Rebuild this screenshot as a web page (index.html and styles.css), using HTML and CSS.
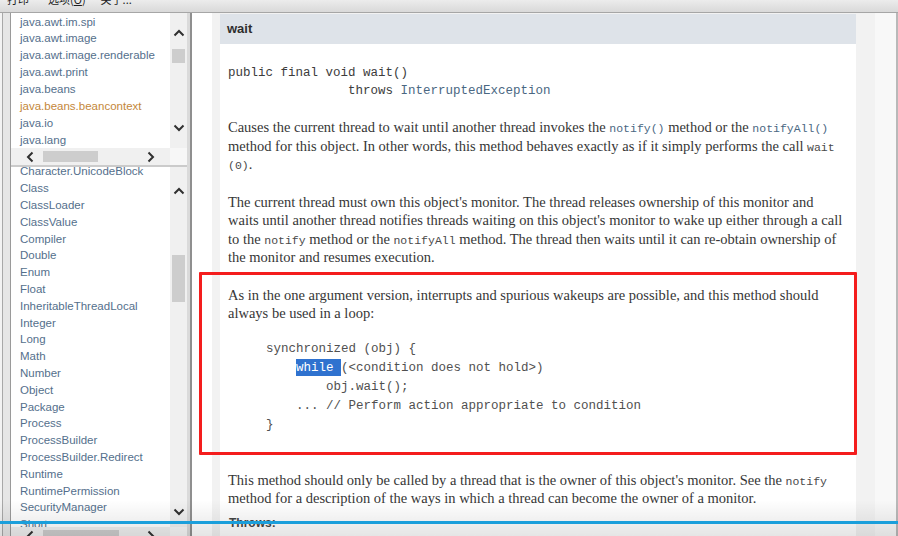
FILE: index.html
```html
<!DOCTYPE html>
<html lang="zh">
<head>
<meta charset="utf-8">
<title>Object (Java Platform SE 8) - wait()</title>
<link rel="stylesheet" href="styles.css">
</head>
<body>
<div class="app">
  <div class="menubar">
    <span class="menu m1">打印</span>
    <span class="menu m2">选项(<u>O</u>)</span>
    <span class="menu m3">关于...</span>
  </div>
  <div class="main">
    <aside class="left">
      <div class="panes">
        <div class="pane pane-top">
          <div class="pane-body">
            <ul class="list">
              <li>java.awt.im.spi</li>
              <li>java.awt.image</li>
              <li>java.awt.image.renderable</li>
              <li>java.awt.print</li>
              <li>java.beans</li>
              <li class="hover">java.beans.beancontext</li>
              <li>java.io</li>
              <li>java.lang</li>
            </ul>
            <div class="vscroll">
              <div class="sb-btn up"><svg width="12" height="8" viewBox="0 0 12 8"><polyline points="1.5,6.5 6,2 10.5,6.5" fill="none" stroke="#303030" stroke-width="2"/></svg></div>
              <div class="thumb-v"></div>
              <div class="sb-fill"></div>
              <div class="sb-btn down"><svg width="12" height="8" viewBox="0 0 12 8"><polyline points="1.5,1.5 6,6 10.5,1.5" fill="none" stroke="#303030" stroke-width="2"/></svg></div>
            </div>
          </div>
          <div class="hscroll">
            <div class="hs-track">
              <div class="hbtn left-btn"><svg width="8" height="12" viewBox="0 0 8 12"><polyline points="6.5,1.5 2,6 6.5,10.5" fill="none" stroke="#303030" stroke-width="2"/></svg></div>
              <div class="thumb-h"></div>
              <div class="sb-fill"></div>
              <div class="hbtn right-btn"><svg width="8" height="12" viewBox="0 0 8 12"><polyline points="1.5,1.5 6,6 1.5,10.5" fill="none" stroke="#303030" stroke-width="2"/></svg></div>
            </div>
            <div class="corner"></div>
          </div>
        </div>
        <div class="pane pane-bottom">
          <div class="pane-body">
            <ul class="list list-classes">
              <li>Character.UnicodeBlock</li>
              <li>Class</li>
              <li>ClassLoader</li>
              <li>ClassValue</li>
              <li>Compiler</li>
              <li>Double</li>
              <li>Enum</li>
              <li>Float</li>
              <li>InheritableThreadLocal</li>
              <li>Integer</li>
              <li>Long</li>
              <li>Math</li>
              <li>Number</li>
              <li>Object</li>
              <li>Package</li>
              <li>Process</li>
              <li>ProcessBuilder</li>
              <li>ProcessBuilder.Redirect</li>
              <li>Runtime</li>
              <li>RuntimePermission</li>
              <li>SecurityManager</li>
              <li>Short</li>
              <li>StackTraceElement</li>
            </ul>
            <div class="vscroll vs-bottom">
              <div class="sb-btn up"><svg width="12" height="8" viewBox="0 0 12 8"><polyline points="1.5,6.5 6,2 10.5,6.5" fill="none" stroke="#303030" stroke-width="2"/></svg></div>
              <div class="thumb-v"></div>
              <div class="sb-fill"></div>
              <div class="sb-btn down"><svg width="12" height="8" viewBox="0 0 12 8"><polyline points="1.5,1.5 6,6 10.5,1.5" fill="none" stroke="#303030" stroke-width="2"/></svg></div>
            </div>
          </div>
          <div class="hscroll hs-bottom">
            <div class="hs-track">
              <div class="hbtn left-btn"><svg width="8" height="12" viewBox="0 0 8 12"><polyline points="6.5,1.5 2,6 6.5,10.5" fill="none" stroke="#303030" stroke-width="2"/></svg></div>
              <div class="thumb-h"></div>
              <div class="sb-fill"></div>
              <div class="hbtn right-btn"><svg width="8" height="12" viewBox="0 0 8 12"><polyline points="1.5,1.5 6,6 1.5,10.5" fill="none" stroke="#303030" stroke-width="2"/></svg></div>
            </div>
            <div class="corner"></div>
          </div>
        </div>
      </div>
    </aside>
    <main class="doc">
      <div class="li-block">
        <div class="member">
          <h4 class="member-title">wait</h4>
          <div class="member-body">
            <pre class="signature">public&nbsp;final&nbsp;void&nbsp;wait()
                throws <a class="link">InterruptedException</a></pre>
            <p class="para">Causes the current thread to wait until another thread invokes the <code class="link">notify()</code> method or the <code class="link">notifyAll()</code><br>method for this object. In other words, this method behaves exactly as if it simply performs the call <code>wait</code><br><code>(0)</code>.</p>
            <p class="para">The current thread must own this object's monitor. The thread releases ownership of this monitor and<br>waits until another thread notifies threads waiting on this object's monitor to wake up either through a call<br>to the <code>notify</code> method or the <code>notifyAll</code> method. The thread then waits until it can re-obtain ownership of<br>the monitor and resumes execution.</p>
            <p class="para">As in the one argument version, interrupts and spurious wakeups are possible, and this method should<br>always be used in a loop:</p>
            <pre class="code">synchronized (obj) {
    <mark class="sel">while </mark>(&lt;condition does not hold&gt;)
        obj.wait();
    ... // Perform action appropriate to condition
}</pre>
            <p class="para para-after">This method should only be called by a thread that is the owner of this object's monitor. See the <code>notify</code><br>method for a description of the ways in which a thread can become the owner of a monitor.</p>
            <dl class="throws">
              <dt>Throws:</dt>
              <dd><code class="link">IllegalMonitorStateException</code> - if the current thread is not the owner of the object's monitor.</dd>
            </dl>
          </div>
        </div>
      </div>
      <div class="doc-edge"></div>
    </main>
  </div>
  <div class="annotation"></div>
  <div class="player-shade"></div>
  <div class="player-progress"></div>
</div>
</body>
</html>
```
FILE: styles.css
```css
* { box-sizing: border-box; }
html, body { margin: 0; padding: 0; }
body {
  width: 898px;
  height: 536px;
  overflow: hidden;
  background: #fff;
  font-family: "Liberation Sans", Arial, sans-serif;
}
.app {
  position: relative;
  width: 898px;
  height: 536px;
  display: flex;
  flex-direction: column;
  overflow: hidden;
}

/* menu bar (top clipped) */
.menubar {
  flex: none;
  height: 13px;
  display: flex;
  overflow: hidden;
  background: linear-gradient(#ececec, #d9d9d9);
  border-bottom: 1px solid #a6a6a6;
  font-family: "Noto Sans CJK SC", "Liberation Sans", sans-serif;
  font-size: 11px;
  color: #1e1e1e;
}
.menu { line-height: 12px; margin-top: -7px; white-space: nowrap; }
.m1 { margin-left: 7px; }
.m2 { margin-left: 19px; }
.m3 { margin-left: 15px; }

.main {
  flex: 1;
  min-height: 0;
  display: flex;
}

/* left navigation frame */
.left {
  flex: none;
  width: 192px;
  display: flex;
  padding-left: 10px;
  background: linear-gradient(to right, #f3f3f3 0 2px, #a8a8a8 2px 3px, #e6e6e6 3px);
  border-right: 2px solid #8f8f8f;
}
.panes {
  flex: 1;
  display: flex;
  flex-direction: column;
  border-left: 1px solid #9a9a9a;
  border-right: 3px solid #dadada;
  min-height: 0;
}
.pane { display: flex; flex-direction: column; overflow: hidden; }
.pane-top { flex: none; height: 154px; border-bottom: 2px solid #cbcbcb; }
.pane-top .pane-body { height: 135px; }
.pane-bottom { flex: 1; min-height: 0; }
.pane-bottom .pane-body { height: 360px; flex: none; }
.pane-body { display: flex; }

.list {
  flex: 1;
  margin: 0;
  padding: 0.5px 0 0 9px;
  list-style: none;
  background: #fff;
  overflow: hidden;
  font-size: 11.5px;
  line-height: 16.9px;
  color: #546f8c;
  white-space: nowrap;
}
.list li.hover { color: #c4873a; }
.list-classes { padding-top: 0; line-height: 16.8px; }
.list-classes li:first-child { margin-top: -3.6px; }

.vscroll {
  flex: none;
  width: 17px;
  display: flex;
  flex-direction: column;
  background: #f0f0f0;
}
.sb-btn {
  flex: none;
  height: 30px;
  display: flex;
  justify-content: center;
  align-items: flex-start;
}
.sb-btn svg { display: block; }
.vscroll .up { padding-top: 16px; }
.vscroll .down { padding-top: 6px; }
.thumb-v {
  flex: none;
  margin: 6px 2px 0;
  height: 14px;
  background: #cdcdcd;
}
.sb-fill { flex: 1; }
.vs-bottom .up { padding-top: 20px; }
.vs-bottom .thumb-v { margin-top: 58px; height: 47px; }
.vs-bottom .down { padding-top: 11px; }

.hscroll {
  flex: none;
  height: 17px;
  display: flex;
}
.hs-track {
  width: 159px;
  display: flex;
  align-items: center;
  background: #f0f0f0;
}
.hbtn { flex: none; width: 32px; height: 17px; display: flex; align-items: center; }
.hbtn svg { display: block; }
.left-btn { padding-left: 15px; }
.right-btn { padding-left: 9px; }
.thumb-h { flex: none; width: 55px; height: 11px; background: #cdcdcd; }
.hs-bottom .thumb-h { width: 76px; }
.corner { flex: 1; background: #f7f7f7; }

/* document frame */
.doc {
  flex: 1;
  display: flex;
  background: #fff;
  min-width: 0;
  overflow: hidden;
}
.li-block {
  flex: none;
  width: 663px;
  margin-left: 20px;
  padding: 1px 19px 0 8px;
  background: #f2f2f2;
}
.member { background: #fff; height: 100%; }
.member-title {
  margin: 0;
  height: 30px;
  padding-left: 7px;
  line-height: 30px;
  background: #dee3e9;
  font-family: "Liberation Sans", Arial, sans-serif;
  font-weight: bold;
  font-size: 13px;
  color: #2e2e2e;
}
.member-body { padding: 0 6px 0 8px; color: #363636; }
.signature {
  margin: 20px 0 0;
  font-family: "Liberation Mono", "Courier New", monospace;
  font-size: 12.5px;
  line-height: 18px;
  color: #3c3c3c;
}
.link { color: #4a6782; }
.para {
  margin: 18px 0 0;
  font-family: "Liberation Serif", "Times New Roman", serif;
  font-size: 14.5px;
  line-height: 18.5px;
  color: #363636;
  white-space: nowrap;
}
.para + .para { margin-top: 19px; }
.para code {
  font-family: "Liberation Mono", "Courier New", monospace;
  font-size: 11.5px;
  line-height: 1;
  color: #4a4a4a;
}
.para code.link { color: #4a6782; }
.code {
  margin: 17px 0 0 38px;
  font-family: "Liberation Mono", "Courier New", monospace;
  font-size: 12.5px;
  line-height: 19px;
  color: #505050;
}
.sel {
  background: #2f72cf;
  color: #fff;
  padding: 1.5px 0;
}
.para-after { margin-top: 36px; }
.throws {
  margin: 7px 0 0;
  font-size: 12px;
  line-height: 16px;
}
.throws dt { font-weight: bold; color: #454545; padding-left: 1px; }
.throws dd { margin: 4px 0 0 10px; font-family: "Liberation Serif", serif; font-size: 14px; }
.throws dd code { font-family: "Liberation Mono", monospace; font-size: 11.5px; }

.doc-edge {
  flex: 1;
  background: #f8f8f8;
  border-right: 2px solid #b9b9b9;
}

/* overlays: recording annotation and video player progress bar */
.annotation {
  position: absolute;
  left: 199px;
  top: 272px;
  width: 658px;
  height: 183px;
  border: 3px solid #f41d1d;
  border-radius: 1px;
}
.player-shade {
  position: absolute;
  left: 0;
  right: 0;
  top: 500px;
  bottom: 0;
  background: linear-gradient(rgba(0,0,0,0), rgba(0,0,0,0.1));
}
.player-progress {
  position: absolute;
  left: 0;
  right: 0;
  top: 521px;
  height: 3px;
  background: #1b9fdb;
}
```
